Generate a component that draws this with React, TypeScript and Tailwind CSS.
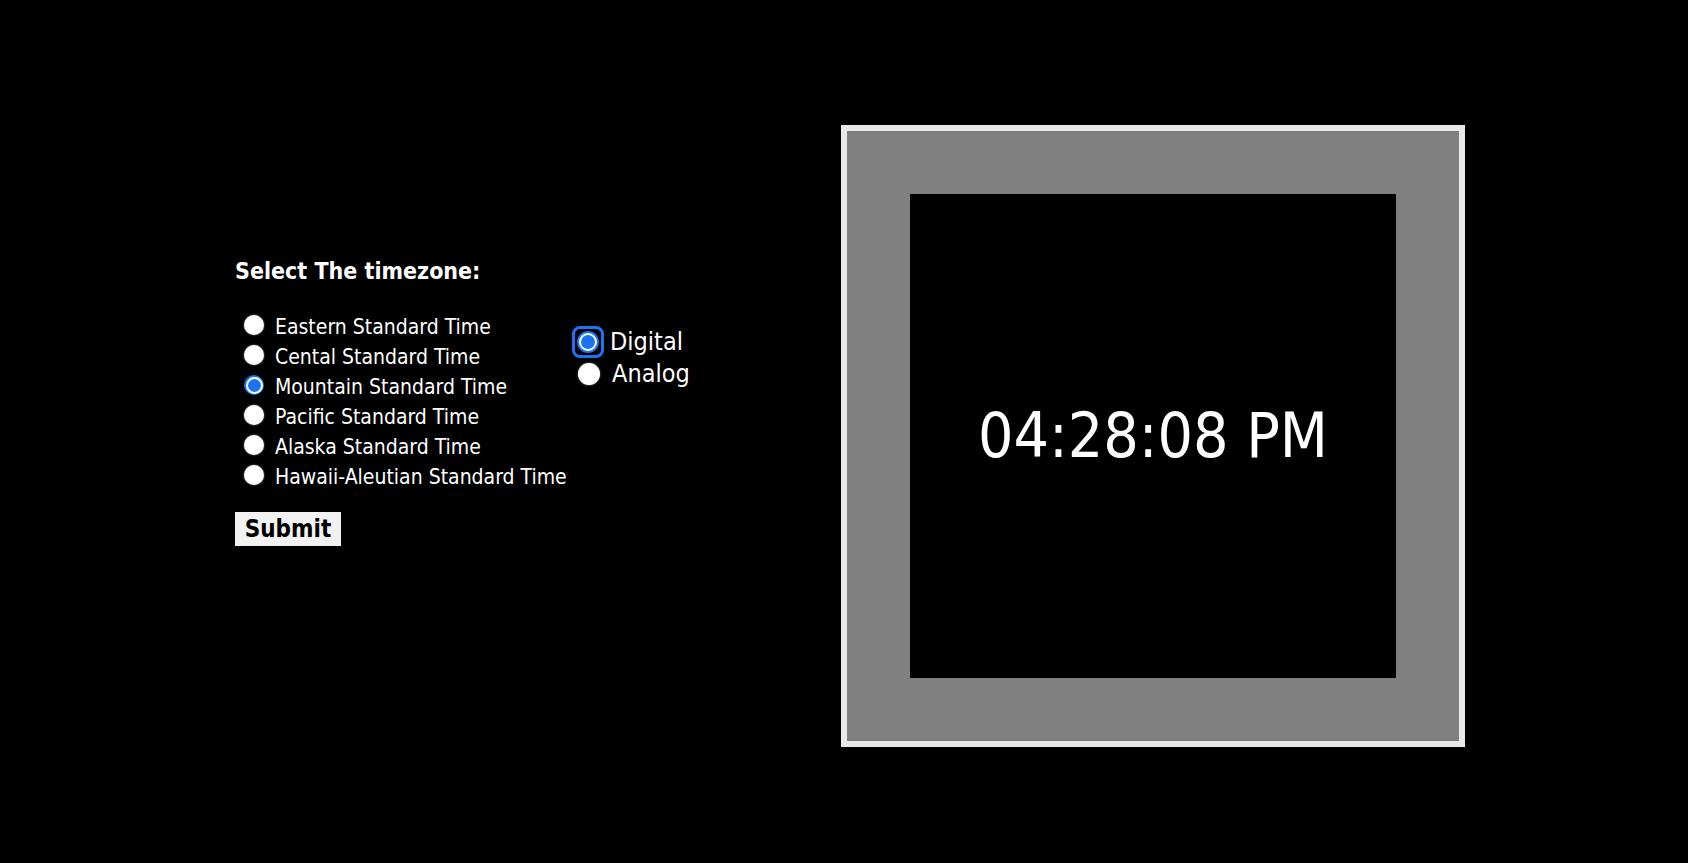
const zones = [
  "Eastern Standard Time",
  "Cental Standard Time",
  "Mountain Standard Time",
  "Pacific Standard Time",
  "Alaska Standard Time",
  "Hawaii-Aleutian Standard Time",
];

const Radio = ({ checked, size = "sm" }: { checked: boolean; size?: "sm" | "lg" }) => {
  const box = size === "lg" ? "w-[22px] h-[22px]" : "w-[20px] h-[20px]";
  const inner = size === "lg" ? "w-[18px] h-[18px]" : "w-[17px] h-[17px]";
  if (!checked) {
    return <span className={`${box} block rounded-full bg-white shadow-[0_0_2px_rgba(255,255,255,0.6)]`} />;
  }
  return (
    <span className={`${box} flex items-center justify-center rounded-full bg-[#1a74f5]`}>
      <span className={`${inner} block rounded-full border-2 border-white bg-[#1a74f5]`} />
    </span>
  );
};

export default function App() {
  const font = { fontFamily: "Tahoma, 'DejaVu Sans Condensed', 'DejaVu Sans', sans-serif" };
  return (
    <div className="min-h-screen bg-black text-white flex items-start pt-[125px]" style={font}>
      <div className="ml-[235px] mt-[132px] flex flex-col">
        <h3 className="text-[23px] leading-[28px] font-bold">Select The timezone:</h3>
        <div className="flex mt-[27px]">
          <div className="w-[338px] flex flex-col pl-[9px]">
            {zones.map((z, i) => (
              <label key={z} className="flex items-start h-[30px] text-[21px] leading-[30px] whitespace-nowrap">
                <span className="mt-[3px] mr-[11px]">
                  <Radio checked={i === 2} />
                </span>
                {z}
              </label>
            ))}
          </div>
          <div className="flex flex-col mt-[14px] -ml-[1px]">
            <label className="flex items-center h-[32px] text-[25px] leading-[32px]">
              <span className="rounded-[8px] border-[3px] border-[#1a74f5] bg-black p-[2px] mr-[6px]">
                <Radio checked size="lg" />
              </span>
              Digital
            </label>
            <label className="flex items-center h-[32px] text-[25px] leading-[32px]">
              <span className="ml-[6px] mr-[12px]">
                <Radio checked={false} size="lg" />
              </span>
              Analog
            </label>
          </div>
        </div>
        <button className="mt-[20px] w-[106px] h-[34px] bg-[#f2f2f2] text-black text-[24px] font-bold leading-none">
          Submit
        </button>
      </div>
      <div className="ml-auto mr-[223px] w-[624px] h-[622px] border-[6px] border-[#e9e9e9] bg-[#808080] flex items-center justify-center">
        <div className="w-[486px] h-[484px] bg-black flex items-center justify-center">
          <span className="text-[62px] leading-none">04:28:08 PM</span>
        </div>
      </div>
    </div>
  );
}
